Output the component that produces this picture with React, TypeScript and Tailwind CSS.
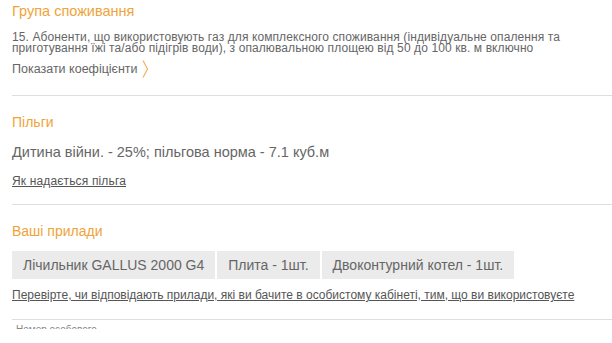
export default function App() {
    const devices = ['Лічильник GALLUS 2000 G4', 'Плита - 1шт.', 'Двоконтурний котел - 1шт.'];

    return (
        <div className="w-[612px] h-[343px] overflow-hidden bg-white pl-3 text-[#666] font-['Liberation_Sans',Arial,sans-serif]">
            <section className="pt-[2px] pb-[16px] border-b border-[#dedede]">
                <h2 className="text-[14.5px] leading-[18px] text-[#f0a338]">Група споживання</h2>
                <p className="mt-[12px] text-[12px] leading-[11px] tracking-[0.1px]">
                    15. Абоненти, що використовують газ для комплексного споживання (індивідуальне опалення та
                    приготування їжі та/або підігрів води), з опалювальною площею від 50 до 100 кв. м включно
                </p>
                <div className="mt-[5px] flex items-center gap-[4px] text-[12.5px] leading-[18px]">
                    <span>Показати коефіцієнти</span>
                    <svg width="7" height="20" viewBox="0 0 7 20" fill="none">
                        <path d="M1 1.5 L5.5 10 L1 18.5" stroke="#f5b46a" strokeWidth="1.3" />
                    </svg>
                </div>
            </section>

            <section className="pt-[17px] pb-[15px] border-b border-[#dedede]">
                <h2 className="text-[14px] leading-[18px] text-[#f0a338]">Пільги</h2>
                <p className="mt-[12px] text-[14.5px] leading-[18px]">
                    Дитина війни. - 25%; пільгова норма - 7.1 куб.м
                </p>
                <a className="mt-[12px] block text-[12px] leading-[16px] tracking-[0.15px] underline text-[#555]" href="#">
                    Як надається пільга
                </a>
            </section>

            <section className="pt-[17px] pb-[16px] border-b border-[#dedede]">
                <h2 className="text-[14px] leading-[18px] text-[#f0a338]">Ваші прилади</h2>
                <div className="mt-[11px] flex gap-[2px]">
                    {devices.map((d) => (
                        <div key={d} className="h-[28px] px-[11px] flex items-center bg-[#ebebeb] text-[14px] text-[#666]">
                            {d}
                        </div>
                    ))}
                </div>
                <a className="mt-[8px] block text-[12px] leading-[16px] underline text-[#555]" href="#">
                    Перевірте, чи відповідають прилади, які ви бачите в особистому кабінеті, тим, що ви використовуєте
                </a>
            </section>

            {/* next block is cut off in the viewport, only the tops of the letters show */}
            <div className="mt-[5px] ml-[4px] h-[4px] overflow-hidden">
                <div className="text-[10px] leading-[10px] text-[#888]">Номер особового</div>
            </div>
        </div>
    );
}
